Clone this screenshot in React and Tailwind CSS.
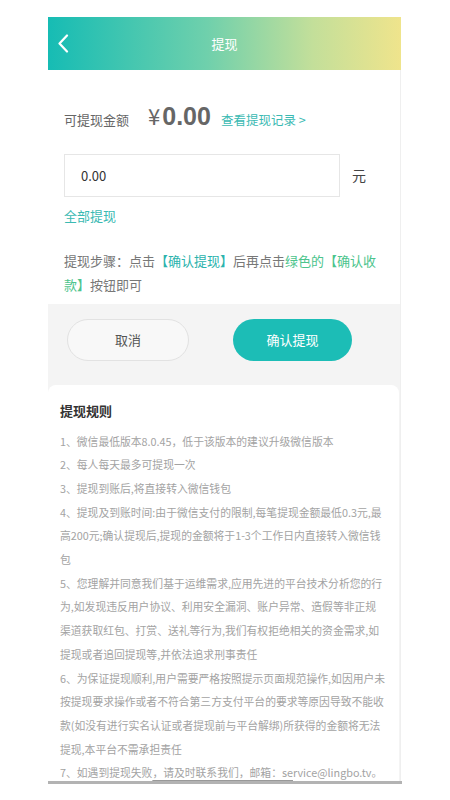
import React from 'react';

// line breaks kept as in the design
const rules = [
  ['1、微信最低版本8.0.45，低于该版本的建议升级微信版本'],
  ['2、每人每天最多可提现一次'],
  ['3、提现到账后,将直接转入微信钱包'],
  [
    '4、提现及到账时间:由于微信支付的限制,每笔提现金额最低0.3元,最',
    '高200元;确认提现后,提现的金额将于1-3个工作日内直接转入微信钱',
    '包',
  ],
  [
    '5、您理解并同意我们基于运维需求,应用先进的平台技术分析您的行',
    '为,如发现违反用户协议、利用安全漏洞、账户异常、造假等非正规',
    '渠道获取红包、打赏、送礼等行为,我们有权拒绝相关的资金需求,如',
    '提现或者追回提现等,并依法追求刑事责任',
  ],
  [
    '6、为保证提现顺利,用户需要严格按照提示页面规范操作,如因用户未',
    '按提现要求操作或者不符合第三方支付平台的要求等原因导致不能收',
    '款(如没有进行实名认证或者提现前与平台解绑)所获得的金额将无法',
    '提现,本平台不需承担责任',
  ],
];

export default function App() {
  return (
    <div className="w-[450px] h-[800px] bg-white pl-[48px] pt-[17px] font-['Noto_Sans_CJK_SC','Noto_Sans',sans-serif]">
      <div className="w-[353px]">
        <Header />
        <div className="h-[711px] overflow-hidden border-r border-[#efefef]">
          <Balance />
          <Actions />
          <Rules />
        </div>
        <div className="h-[3px] bg-[#b3b3b3] w-[354px]" />
      </div>
    </div>
  );
}

function Header() {
  return (
    <div className="h-[53px] flex items-center bg-[linear-gradient(90deg,#16bcb4_0%,#6fd0ac_45%,#c3df9a_75%,#efe48c_100%)]">
      <div className="w-[40px] pl-[9px] flex items-center">
        <svg width="12" height="19" viewBox="0 0 12 19" fill="none">
          <path d="M10 1.5L2.5 9.5L10 17.5" stroke="white" strokeWidth="2.2" strokeLinecap="round" strokeLinejoin="round" />
        </svg>
      </div>
      <div className="flex-1 text-center text-white text-[13px]">提现</div>
      <div className="w-[40px]" />
    </div>
  );
}

function Balance() {
  return (
    <div className="bg-white px-[16px] pt-[29px] pb-[7px]">
      <div className="flex items-baseline">
        <span className="text-[13px] text-[#666]">可提现金额</span>
        <span className="ml-[19px] text-[22px] text-[#666]">¥</span>
        <span className="ml-[2px] text-[25px] font-bold text-[#666] leading-none font-['Liberation_Sans',sans-serif]">0.00</span>
        <span className="ml-[10px] text-[12.5px] text-[#3bbab3]">查看提现记录 &gt;</span>
      </div>
      <div className="flex items-center mt-[22px]">
        <div className="w-[276px] h-[43px] border border-[#e6e6e6] flex items-center pl-[16px] text-[13px] text-[#333]">0.00</div>
        <span className="ml-[12px] text-[14px] text-[#444]">元</span>
      </div>
      <div className="mt-[9px] text-[13px] text-[#3bbab3]">全部提现</div>
      <p className="mt-[23px] text-[13px] leading-[24px] text-[#777]">
        提现步骤：点击<span className="text-[#2bb3ad]">【确认提现】</span>后再点击<span className="text-[#4cc48c]">绿色的【确认收款】</span>按钮即可
      </p>
    </div>
  );
}

function Actions() {
  return (
    <div className="bg-[#f4f4f4] pt-[15px] pb-[24px] flex">
      <button className="ml-[19px] w-[122px] h-[42px] rounded-full border border-[#e2e2e2] bg-[#f8f8f8] text-[13px] text-[#555]">取消</button>
      <button className="ml-[44px] w-[119px] h-[42px] rounded-full bg-[#1cbdb6] text-[13px] text-white">确认提现</button>
    </div>
  );
}

function Rules() {
  return (
    <div className="bg-[#f4f4f4]">
      <div className="bg-white rounded-t-[8px] pl-[12px] pr-[10px] pt-[14px] mr-[1px]">
        <h3 className="text-[13px] font-bold text-[#333] leading-[24px]">提现规则</h3>
        <div className="mt-[7px] text-[10.8px] leading-[23.7px] text-[#a3a3a3] whitespace-nowrap">
          {rules.map(lines => (
            <div key={lines[0]}>
              {lines.map(l => <p key={l}>{l}</p>)}
            </div>
          ))}
          <p>
            7、如遇到提现失败<span className="underline decoration-[#999] underline-offset-[3px]">，请及时联系我们，邮箱：se</span>rvice@lingbo.tv。
          </p>
        </div>
      </div>
    </div>
  );
}
